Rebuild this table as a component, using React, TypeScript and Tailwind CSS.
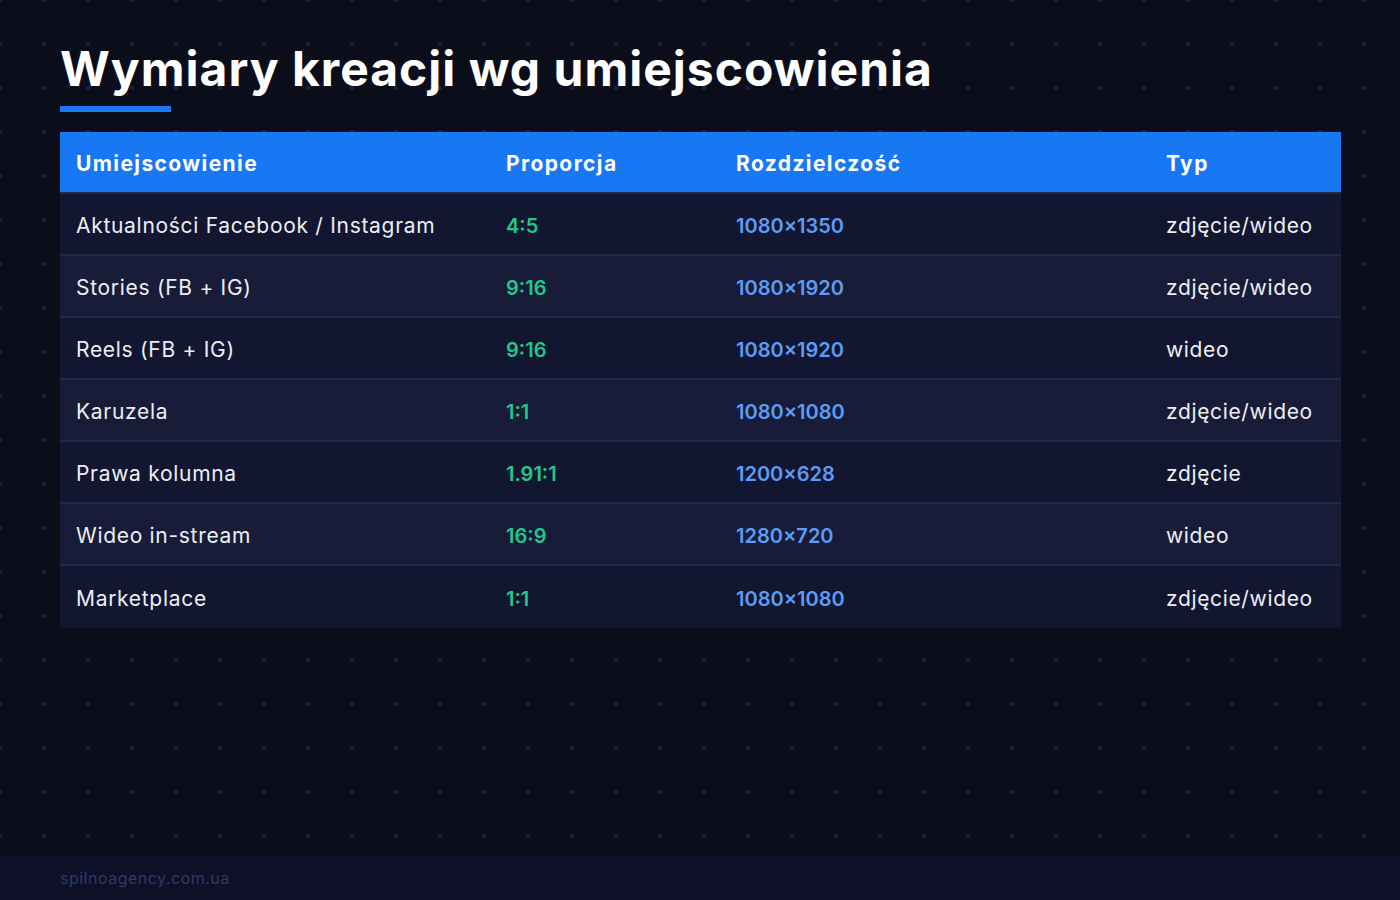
const rows = [
  { place: 'Aktualności Facebook / Instagram', ratio: '4:5', size: '1080×1350', type: 'zdjęcie/wideo' },
  { place: 'Stories (FB + IG)', ratio: '9:16', size: '1080×1920', type: 'zdjęcie/wideo' },
  { place: 'Reels (FB + IG)', ratio: '9:16', size: '1080×1920', type: 'wideo' },
  { place: 'Karuzela', ratio: '1:1', size: '1080×1080', type: 'zdjęcie/wideo' },
  { place: 'Prawa kolumna', ratio: '1.91:1', size: '1200×628', type: 'zdjęcie' },
  { place: 'Wideo in-stream', ratio: '16:9', size: '1280×720', type: 'wideo' },
  { place: 'Marketplace', ratio: '1:1', size: '1080×1080', type: 'zdjęcie/wideo' },
];

export default function App() {
  return (
    <div className="w-[1400px] h-[900px] flex flex-col bg-[#0b0d1b] font-['Inter',sans-serif] overflow-hidden">
      <div className="flex-1 px-[60px] pt-[40px] bg-[radial-gradient(circle,#1b1f3f_2px,transparent_2.5px)] bg-[size:44px_44px] bg-[position:-22px_-22px]">
        <h1 className="text-[48px] leading-[58px] font-bold text-white tracking-[1px]">
          Wymiary kreacji wg umiejscowienia
        </h1>
        <div className="mt-[8px] w-[111px] h-[6px] bg-[#1a78f2]" />

        <div className="mt-[20px] w-[1281px]">
          <div className="grid grid-cols-[430px_230px_430px_1fr] h-[62px] pt-[4px] items-center bg-[#1877f2] border-b-2 border-[#232a4b] text-white text-[21px] font-bold tracking-[1.4px]">
            <div className="px-4">Umiejscowienie</div>
            <div className="px-4">Proporcja</div>
            <div className="px-4">Rozdzielczość</div>
            <div className="px-4">Typ</div>
          </div>
          {rows.map((r, i) => (
            <div
              key={r.place}
              className={`grid grid-cols-[430px_230px_430px_1fr] h-[62px] pt-[4px] items-center text-[20px] ${
                i % 2 === 0 ? 'bg-[#121631]' : 'bg-[#181c38]'
              } ${i < rows.length - 1 ? 'border-b-2 border-[#222848]' : ''}`}
            >
              <div className="px-4 text-[21px] text-[#eceef4] tracking-[0.7px]">{r.place}</div>
              <div className="px-4 font-semibold text-[#1ec98a]">{r.ratio}</div>
              <div className="px-4 font-semibold text-[#5b9df6]">{r.size}</div>
              <div className="px-4 text-[21px] text-[#eceef4] tracking-[0.65px]">{r.type}</div>
            </div>
          ))}
        </div>
      </div>
      <div className="h-[44px] flex items-center px-[60px] bg-[#0e1027] text-[16px] text-[#2d3a6a] tracking-[0.5px]">
        spilnoagency.com.ua
      </div>
    </div>
  );
}
